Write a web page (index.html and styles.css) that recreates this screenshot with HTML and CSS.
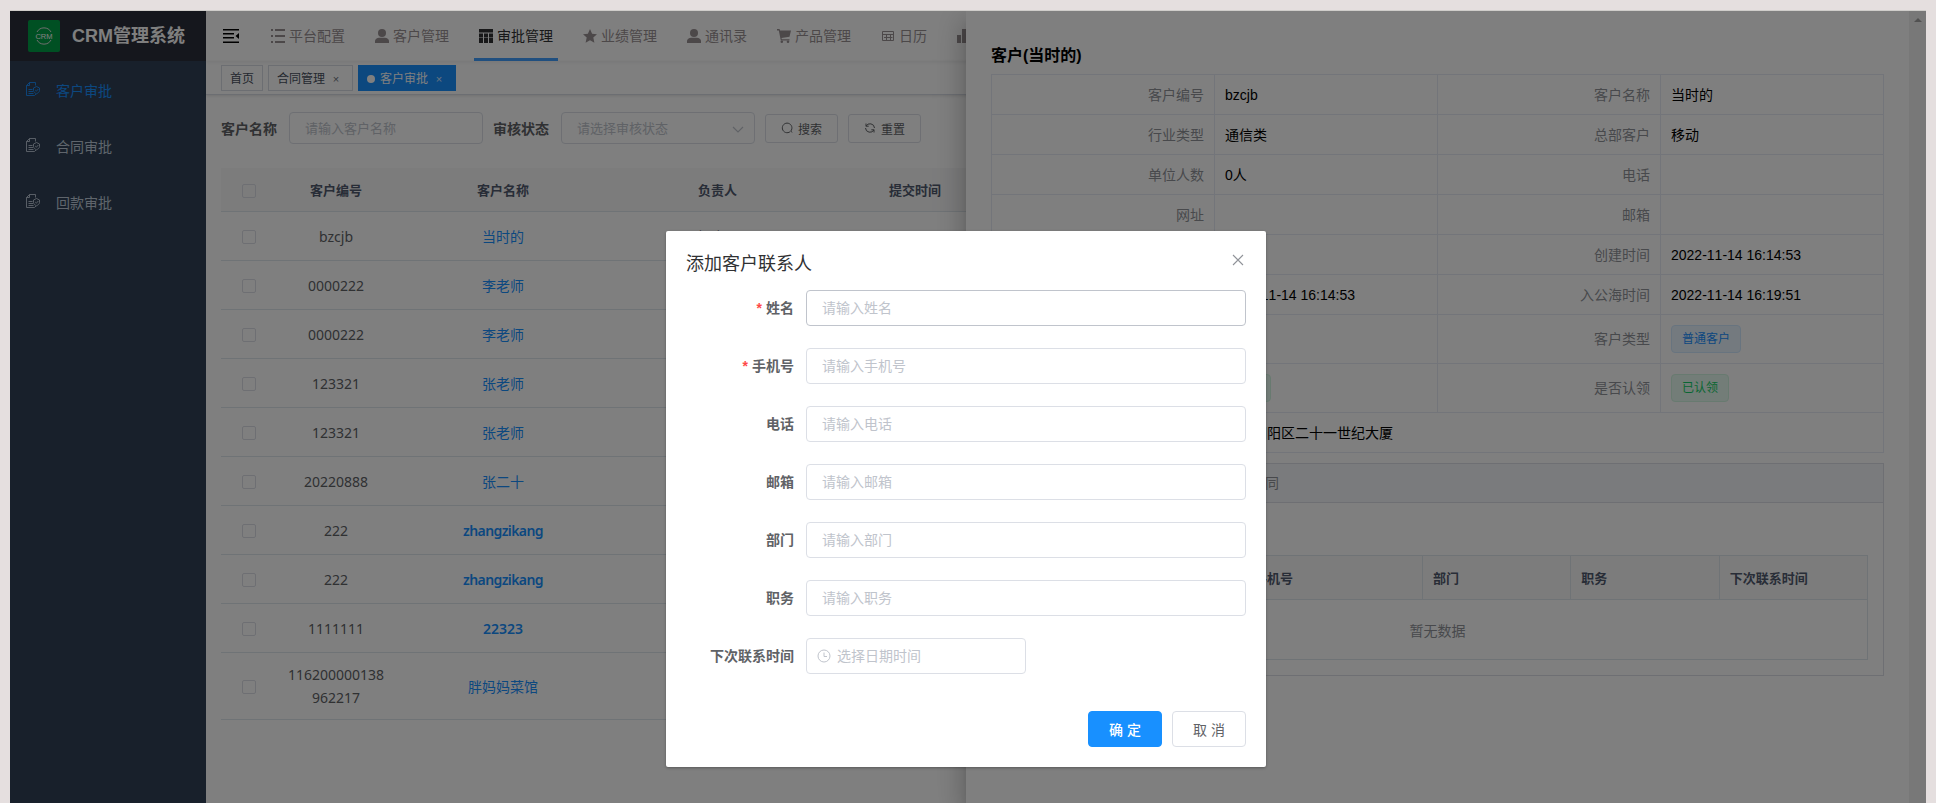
FILE: index.html
```html
<!DOCTYPE html>
<html lang="zh-CN">
<head>
<meta charset="utf-8" />
<title>CRM管理系统</title>
<link rel="stylesheet" href="styles.css">
</head>

<body>
<!-- 图标 -->
<svg class="symbols" width="0" height="0">
  <symbol id="i-user" viewBox="0 0 14 14"><circle cx="7" cy="4" r="4"/><path d="M0 14v-2c0-2 2-3.300 4-3.300h6c2 0 4 1.300 4 3.300v2z"/></symbol>
  <symbol id="i-approve" viewBox="0 0 14 14" fill="none" stroke="currentColor" stroke-width=".9"><path d="M9.500 3.500v-3h-6l-3 3v10h8l1.500-1.500M.500 3.500h3v-3M2.500 7.500h4M2.500 9.500h4.500M2.500 11.500h5"/><path d="M10.500 4.500l3 1.500v2.500c0 1.500-1.500 2.500-3 3.300-1.500-.8-3-1.800-3-3.300V6zM9.200 8l1.200 1.200L12.300 7"/></symbol>
</svg>

<div class="app">
  <!-- 左侧菜单 -->
  <div class="sidebar">
    <div class="logo">
      <span class="logo-img">
        <svg width="32" height="32" viewBox="0 0 32 32"><path d="M9 12a8 8 0 0 1 14 0M9 20a8 8 0 0 0 14 0" fill="none" stroke="#ddd" stroke-width="1"/><text x="16" y="19" text-anchor="middle">CRM</text></svg>
      </span>
      <h1>CRM管理系统</h1>
    </div>
    <ul class="menu">
      <li class="active"><svg><use href="#i-approve"/></svg><span>客户审批</span></li>
      <li><svg><use href="#i-approve"/></svg><span>合同审批</span></li>
      <li><svg><use href="#i-approve"/></svg><span>回款审批</span></li>
    </ul>
  </div>

  <div class="main">
    <div class="navbar">
      <svg class="hamburger" width="16" height="14" viewBox="0 0 16 14"><path d="M0 0h16v1.500H0zM0 4h11v1.500H0zM0 8h11v1.500H0zM0 12.500h16V14H0zM16 4v6l-3.500-3z"/></svg>
      <ul class="topmenu">
        <li><svg><path d="M0 0h2v2H0zM4 0h10v2H4zM0 6h2v2H0zM4 6h10v2H4zM0 12h2v2H0zM4 12h10v2H4z"/></svg>平台配置</li>
        <li><svg><use href="#i-user"/></svg>客户管理</li>
        <li class="active"><svg><path d="M0 0h14v3.500H0zM0 4.500h4v4H0zM5 4.500h4v4H5zM10 4.500h4v4h-4zM0 9h4v5H0zM5 9h4v5H5zM10 9h4v5h-4z"/></svg>审批管理</li>
        <li><svg><path d="M7 0l2.100 4.700 4.900.500-3.700 3.300 1.100 5.200L7 11.200l-4.400 2.500 1.100-5.200L0 5.200l4.900-.500z"/></svg>业绩管理</li>
        <li><svg><use href="#i-user"/></svg>通讯录</li>
        <li><svg><path d="M0 0h2.500l.600 1.500H14l-1.500 6.300L4.500 9l.300 1.200H12.500v1.300H3.800L1.800 1.500H0z"/><circle cx="4.800" cy="12.700" r="1.300"/><circle cx="11" cy="12.700" r="1.300"/></svg>产品管理</li>
        <li><svg fill="none" stroke="currentColor"><path d="M1.500 2.500h11v9h-11zM1.500 5.500h11M3 8.500h8.500M5.500 6v5.500M9.500 6v5.500"/></svg>日历</li>
        <li><svg><path d="M0 6h4v8H0zM5 0h4v14H5zM10 4h4v10h-4z"/></svg></li>
      </ul>
    </div>
    <div class="tags">
      <span class="tag-item">首页</span>
      <span class="tag-item closable">合同管理<i>×</i></span>
      <span class="tag-item closable active">客户审批<i>×</i></span>
    </div>

    <div class="content">
      <form class="search">
        <label>客户名称</label>
        <input type="text" placeholder="请输入客户名称" />
        <label>审核状态</label>
        <div class="select">
          <input type="text" placeholder="请选择审核状态" readonly />
          <svg width="12" height="8" viewBox="0 0 12 8"><path d="M1 1l5 5 5-5" fill="none" stroke="#c0c4cc" stroke-width="1.200"/></svg>
        </div>
        <button type="button" class="btn-mini"><svg width="12" height="12" viewBox="0 0 12 12"><path d="M9.200 9.600a4.800 4.800 0 1 1 .6-.6l1.200 1.500" fill="none" stroke="#606266"/></svg>搜索</button>
        <button type="button" class="btn-mini"><svg width="12" height="12" viewBox="0 0 12 12"><path d="M2 1.500v2.700h2.700M2 4.200A4.500 4.500 0 0 1 10.500 6M1.500 6A4.500 4.500 0 0 0 10 7.800M10 10.500V7.800H7.300" fill="none" stroke="#606266"/></svg>重置</button>
      </form>

      <table class="list">
        <colgroup><col class="c1"><col class="c2"><col class="c3"><col class="c4"><col class="c5"></colgroup>
        <thead>
          <tr><th><s></s></th><th>客户编号</th><th>客户名称</th><th>负责人</th><th>提交时间</th></tr>
        </thead>
        <tbody>
          <tr><td><s></s></td><td>bzcjb</td><td><a>当时的</a></td><td>赵晓丹</td><td></td></tr>
          <tr><td><s></s></td><td>0000222</td><td><a>李老师</a></td><td></td><td></td></tr>
          <tr><td><s></s></td><td>0000222</td><td><a>李老师</a></td><td></td><td></td></tr>
          <tr><td><s></s></td><td>123321</td><td><a>张老师</a></td><td></td><td></td></tr>
          <tr><td><s></s></td><td>123321</td><td><a>张老师</a></td><td></td><td></td></tr>
          <tr><td><s></s></td><td>20220888</td><td><a>张二十</a></td><td></td><td></td></tr>
          <tr><td><s></s></td><td>222</td><td><a class="en">zhangzikang</a></td><td></td><td></td></tr>
          <tr><td><s></s></td><td>222</td><td><a class="en">zhangzikang</a></td><td></td><td></td></tr>
          <tr><td><s></s></td><td>1111111</td><td><a class="num">22323</a></td><td></td><td></td></tr>
          <tr class="tall"><td><s></s></td><td>116200000138<br>962217</td><td><a>胖妈妈菜馆</a></td><td></td><td></td></tr>
        </tbody>
      </table>
    </div>
  </div>

  <!-- 客户详情抽屉 -->
  <div class="drawer">
    <div class="drawer-body">
      <h3>客户(当时的)</h3>
      <table class="info">
        <tr><th>客户编号</th><td>bzcjb</td><th>客户名称</th><td>当时的</td></tr>
        <tr><th>行业类型</th><td>通信类</td><th>总部客户</th><td>移动</td></tr>
        <tr><th>单位人数</th><td>0人</td><th>电话</th><td></td></tr>
        <tr><th>网址</th><td></td><th>邮箱</th><td></td></tr>
        <tr><th></th><td></td><th>创建时间</th><td>2022-11-14 16:14:53</td></tr>
        <tr><th></th><td>2022-11-14 16:14:53</td><th>入公海时间</th><td>2022-11-14 16:19:51</td></tr>
        <tr class="high"><th></th><td></td><th>客户类型</th><td><span class="label">普通客户</span></td></tr>
        <tr class="high"><th></th><td><span class="label success">通过</span></td><th>是否认领</th><td><span class="label success">已认领</span></td></tr>
        <tr><th></th><td colspan="3">北京朝阳区二十一世纪大厦</td></tr>
      </table>
      <div class="tabcard">
        <div class="tabcard-head"><span>合同</span></div>
        <table class="contacts">
          <colgroup><col class="d1"><col class="d2"><col><col><col></colgroup>
          <tr><th></th><th>手机号</th><th>部门</th><th>职务</th><th>下次联系时间</th></tr>
          <tr><td colspan="5">暂无数据</td></tr>
        </table>
      </div>
    </div>
    <div class="scrollbar"><i></i></div>
  </div>

  <div class="mask"></div>

  <!-- 添加联系人 -->
  <div class="dialog">
    <div class="dialog-head">
      <span>添加客户联系人</span>
      <svg width="12" height="12" viewBox="0 0 12 12"><path d="M1 1l10 10M11 1L1 11" stroke="#909399" stroke-width="1.100"/></svg>
    </div>
    <form class="dialog-form">
      <dl><dt class="must">姓名</dt><dd><input class="hover" type="text" placeholder="请输入姓名" /></dd></dl>
      <dl><dt class="must">手机号</dt><dd><input type="text" placeholder="请输入手机号" /></dd></dl>
      <dl><dt>电话</dt><dd><input type="text" placeholder="请输入电话" /></dd></dl>
      <dl><dt>邮箱</dt><dd><input type="text" placeholder="请输入邮箱" /></dd></dl>
      <dl><dt>部门</dt><dd><input type="text" placeholder="请输入部门" /></dd></dl>
      <dl><dt>职务</dt><dd><input type="text" placeholder="请输入职务" /></dd></dl>
      <dl><dt>下次联系时间</dt><dd class="date"><svg width="14" height="14" viewBox="0 0 14 14"><circle cx="7" cy="7" r="6" /><path d="M7 3.500V7.500H10"/></svg><input type="text" placeholder="选择日期时间" /></dd></dl>
    </form>
    <div class="dialog-foot">
      <button type="button" class="btn primary">确 定</button>
      <button type="button" class="btn">取 消</button>
    </div>
  </div>
</div>
</body>
</html>
```

FILE: styles.css
```css
* {box-sizing: border-box;}
body {margin: 0; height: 803px; overflow: hidden; background: #e5dfdf; font-family: "Liberation Sans", "Noto Sans CJK SC", sans-serif; font-size: 14px;}
ul, dl, dd, h1, h3 {margin: 0; padding: 0; list-style: none;}
input, button {font-family: inherit; outline: 0;}
input::placeholder {color: #c0c4cc; opacity: 1;}
table {border-collapse: separate; border-spacing: 0; table-layout: fixed;}
.symbols {position: absolute;}

.app {position: relative; display: flex; height: 793px; margin: 10px 10px 0; border-top: 1px solid #cfcdca; overflow: hidden; background: #fff;}

/* 左侧 */
.sidebar {width: 196px; flex: none; background: #304156;}
.logo {display: flex; align-items: center; height: 50px; padding-left: 18px; background: #2b2f3a;}
.logo-img {width: 32px; height: 32px; margin-bottom: 0; border-radius: 2px; background: #00a046;}
.logo-img text {font-size: 7.5px; fill: #fff;}
.logo h1 {margin-left: 12px; font-size: 18px; line-height: 30px; font-weight: bold; color: #fff; white-space: nowrap;}
.menu li {display: flex; align-items: center; height: 56px; padding-left: 16px; color: #bfcbd9;}
.menu svg {width: 14px; height: 14px;}
.menu span {margin: 4px 0 0 16px; line-height: 20px;}
.menu li.active {color: #1890ff;}

/* 顶部 */
.main {flex: none; width: 1720px;}
.navbar {display: flex; align-items: center; height: 50px; padding-left: 17px; box-shadow: 0 1px 4px rgba(0,21,41,.08);}
.topmenu {display: flex; margin-left: 17px;}
.topmenu li {display: flex; align-items: center; height: 50px; margin: 0 10px; padding: 2px 5px 0; color: #999093; border-bottom: 3px solid transparent; line-height: 20px;}
.topmenu svg {width: 14px; height: 14px; margin: 1px 4px 0 0; fill: currentColor;}
.topmenu svg[fill=none] {fill: none;}
.topmenu li.active {color: #303133; border-bottom-color: #409eff;}
.tags {display: flex; gap: 5px; height: 34px; padding: 4px 15px 0; border-bottom: 1px solid #d8dce5; box-shadow: 0 1px 3px 0 rgba(0,0,0,.12);}
.tag-item {height: 26px; padding: 0 8px; border: 1px solid #d8dce5; line-height: 26px; font-size: 12px; color: #495060; white-space: nowrap;}
.tag-item.closable {width: 85px;}
.tag-item i {display: inline-block; width: 16px; margin-left: 3px; text-align: center; font-style: normal; font-size: 11px; opacity: .8;}
.tag-item.active {width: 98px; background: #1890ff; border-color: #1890ff; color: #fff;}
.tag-item.active:before {content: ""; display: inline-block; width: 8px; height: 8px; margin-right: 5px; border-radius: 50%; background: #fff;}

/* 搜索 */
.content {padding: 17px 15px;}
.search {display: flex; align-items: center; height: 32px;}
.search label {margin-right: 12px; font-weight: bold; color: #606266;}
.search input {width: 194px; height: 32px; padding: 0 15px; border: 1px solid #dcdfe6; border-radius: 4px; font-size: 13px;}
.search input + label {margin-left: 10px;}
.select {position: relative; margin-right: 10px;}
.select svg {position: absolute; right: 11px; top: 14px;}
.btn-mini {display: flex; align-items: center; justify-content: center; width: 73px; height: 29px; margin-right: 10px; padding: 0; border: 1px solid #dcdfe6; border-radius: 3px; background: #fff; font-size: 12px; color: #606266;}
.btn-mini svg {margin-right: 5px;}

/* 列表 */
.list {width: 784px; margin-top: 24px; font-family: "Noto Sans", "Noto Sans CJK SC", sans-serif;}
.list .c1 {width: 55px;}
.list .c2 {width: 120px;}
.list .c3 {width: 214px;}
.list .c4 {width: 215px;}
.list .c5 {width: 180px;}
.list th {height: 44px; padding: 0; font-size: 13px; line-height: 20px; color: #515a6e; background: #f8f8f9; border-bottom: 1px solid #dfe6ec;}
.list td {height: 49px; padding: 0; text-align: center; line-height: 23px; color: #606266; border-bottom: 1px solid #dfe6ec;}
.list .tall td {height: 67px;}
.list s {display: block; width: 14px; height: 14px; margin: 2px auto 0; border: 1px solid #dcdfe6; border-radius: 2px;}
.list a {color: #1890ff;}
.list a.en {font-weight: 600; letter-spacing: -.6px;}
.list a.num {font-weight: 600;}

/* 抽屉 */
.drawer {position: absolute; left: 956px; right: 0; top: 0; bottom: 0; display: flex; background: #fff; font-kerning: none; box-shadow: 0 8px 10px -5px rgba(0,0,0,.2), 0 16px 24px 2px rgba(0,0,0,.14), 0 6px 30px 5px rgba(0,0,0,.12);}
.drawer-body {flex: 1; padding: 32px 25px 0;}
.drawer h3 {height: 31px; line-height: 25px; font-size: 16px; font-weight: bold;}
.info {width: 893px; border-top: 1px solid #e6ebf5; border-left: 1px solid #e6ebf5;}
.info th, .info td {height: 40px; padding: 0 10px; border-right: 1px solid #e6ebf5; border-bottom: 1px solid #e6ebf5; font-weight: normal; line-height: 20px; text-align: left;}
.info th {text-align: right; color: #909399;}
.info .high th, .info .high td {height: 49px;}
.label {display: inline-block; height: 28px; padding: 0 10px; border: 1px solid #d1e9ff; border-radius: 4px; background: #e8f4ff; color: #1890ff; font-size: 12px; line-height: 26px;}
.label.success {background: #e7faf0; border-color: #d0f5e0; color: #13ce66;}
.tabcard {width: 893px; height: 213px; margin-top: 10px; border: 1px solid #dcdfe6;}
.tabcard-head {height: 39px; padding-left: 259px; line-height: 39px; background: #f5f7fa; border-bottom: 1px solid #dcdfe6; color: #909399;}
.contacts {width: 861px; margin: 52px 15px 0; border-top: 1px solid #dfe6ec; border-left: 1px solid #dfe6ec;}
.contacts .d1 {width: 236px;}
.contacts .d2 {width: 179px;}
.contacts th {height: 44px; padding: 0 10px; text-align: left; font-size: 13px; color: #515a6e; background: #f8f8f9; border-right: 1px solid #dfe6ec; border-bottom: 1px solid #dfe6ec;}
.contacts td {height: 60px; padding: 0; text-align: center; color: #909399; border-right: 1px solid #dfe6ec; border-bottom: 1px solid #dfe6ec;}
.scrollbar {width: 17px; background: #f1f1f1;}
.scrollbar i {display: block; width: 0; margin: 7px auto 0; border: 4px solid transparent; border-top: 0; border-bottom-color: #a3a3a3;}

.mask {position: absolute; left: 0; top: 0; right: 0; bottom: 0; background: rgba(0,0,0,.5);}

/* 弹窗 */
.dialog {position: absolute; left: 656px; top: 220px; width: 600px; height: 536px; padding: 20px; border-radius: 2px; background: #fff; box-shadow: 0 1px 3px rgba(0,0,0,.3);}
.dialog-head {display: flex; justify-content: space-between; height: 39px; font-size: 18px; line-height: 27px; color: #303133;}
.dialog-head svg {margin: 3px 2px 0 0;}
.dialog-form dl {display: flex; height: 36px; margin-bottom: 22px;}
.dialog-form dt {width: 120px; padding-right: 12px; line-height: 36px; text-align: right; font-weight: bold; color: #606266;}
.dialog-form dt.must:before {content: "*"; margin-right: 4px; color: #ff4949;}
.dialog-form dd {position: relative; width: 440px;}
.dialog-form input {display: block; width: 100%; height: 36px; padding: 0 15px; border: 1px solid #dcdfe6; border-radius: 4px; font-size: 14px;}
.dialog-form input.hover {border-color: #c0c4cc;}
.dialog-form dd.date {width: 220px;}
.dialog-form dd.date input {padding-left: 30px;}
.dialog-form dd.date svg {position: absolute; left: 11px; top: 11px; fill: none; stroke: #c0c4cc;}
.dialog-foot {display: flex; justify-content: flex-end; gap: 10px; padding-top: 15px;}
.btn {width: 74px; height: 36px; padding: 0; border: 1px solid #dcdfe6; border-radius: 4px; background: #fff; font-size: 14px; color: #606266;}
.btn.primary {background: #1890ff; border-color: #1890ff; color: #fff; font-weight: 500;}
```
